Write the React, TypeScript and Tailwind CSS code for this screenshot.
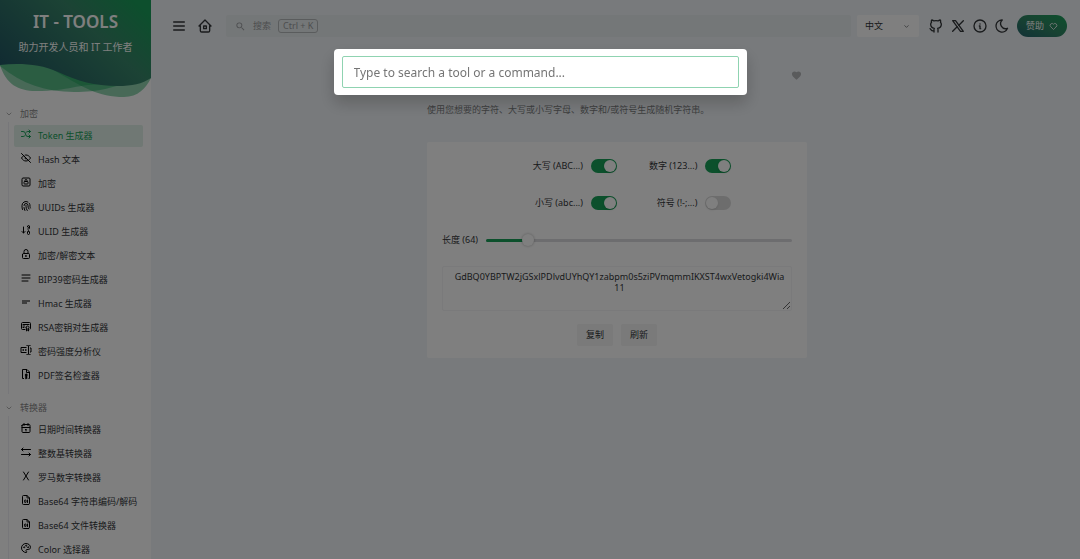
import React, { useState } from 'react';
import {
  TbAlignJustified, TbArrowsLeftRight, TbArrowsShuffle, TbBrandGithub, TbBrandX,
  TbCalendar, TbCertificate, TbEyeOff, TbFileDigit, TbFingerprint, TbHeart,
  TbHome2, TbInfoCircle, TbLetterX, TbLock, TbLockSquare, TbMenu2, TbMoon,
  TbPalette, TbSortDescendingNumbers,
} from 'react-icons/tb';
import { MdFavorite, MdSearch, MdShortText } from 'react-icons/md';
import { ChevronDown } from 'lucide-react';

interface Tool {
  name: string;
  icon: React.ElementType;
}

interface Category {
  name: string;
  tools: Tool[];
}

const PasswordIcon = (props: React.SVGProps<SVGSVGElement>) => (
  <svg viewBox="0 0 24 24" width="1em" height="1em" fill="none" stroke="currentColor" strokeWidth="2" {...props}>
    <path d="M13 7H2v10h11M20 8h2v8h-2M17 3v18M13 3c2 0 4 0 4 2c0-2 2-2 4-2M13 21c2 0 4 0 4-2c0 2 2 2 4 2" />
    <path d="M5 12h3M10 12h3" strokeWidth="3" />
  </svg>
);

const FileCertIcon = (props: React.SVGProps<SVGSVGElement>) => (
  <svg viewBox="0 0 24 24" width="1em" height="1em" fill="none" stroke="currentColor" strokeWidth="2" {...props}>
    <path d="M8 21H5V3h9l5 5v13h-2" />
    <path d="M13 3v6h6" />
    <circle cx="12.5" cy="14" r="2" fill="currentColor" />
    <path d="M11 16v6l1.500-1l1.500 1v-6" fill="currentColor" strokeWidth="1" />
  </svg>
);

const categories: Category[] = [
  {
    name: '加密',
    tools: [
      { name: 'Token 生成器', icon: TbArrowsShuffle },
      { name: 'Hash 文本', icon: TbEyeOff },
      { name: '加密', icon: TbLockSquare },
      { name: 'UUIDs 生成器', icon: TbFingerprint },
      { name: 'ULID 生成器', icon: TbSortDescendingNumbers },
      { name: '加密/解密文本', icon: TbLock },
      { name: 'BIP39密码生成器', icon: TbAlignJustified },
      { name: 'Hmac 生成器', icon: MdShortText },
      { name: 'RSA密钥对生成器', icon: TbCertificate },
      { name: '密码强度分析仪', icon: PasswordIcon },
      { name: 'PDF签名检查器', icon: FileCertIcon },
    ],
  },
  {
    name: '转换器',
    tools: [
      { name: '日期时间转换器', icon: TbCalendar },
      { name: '整数基转换器', icon: TbArrowsLeftRight },
      { name: '罗马数字转换器', icon: TbLetterX },
      { name: 'Base64 字符串编码/解码', icon: TbFileDigit },
      { name: 'Base64 文件转换器', icon: TbFileDigit },
      { name: 'Color 选择器', icon: TbPalette },
    ],
  },
];

const Hero = () => (
  <a href="#" className="relative block h-[98px] shrink-0 text-center text-white">
    <svg viewBox="0 0 151 98" preserveAspectRatio="none" className="absolute inset-0 h-full w-full">
      <defs>
        <linearGradient id="hero" x1="0" y1="0.8" x2="1" y2="0.2">
          <stop offset="0" stopColor="#215563" />
          <stop offset="0.65" stopColor="#38866a" />
          <stop offset="1" stopColor="#1a9e5a" />
        </linearGradient>
      </defs>
      <g fill="#18a058" fillOpacity="0.48">
        <path d="M0 65C6 84 18 91 36 91C70 91 76 84 108 84V60H0Z" />
        <path d="M0 66C22 84 46 92 74 92C100 92 112 88 140 78V60H0Z" />
        <path d="M50 68C84 88 98 97 124 97C138 97 146 88 151 78V60H50Z" />
      </g>
      <path d="M0 65C20 63 40 64 58 72C78 81 94 86 118 86C132 86 142 84 151 78V0H0Z" fill="url(#hero)" />
    </svg>
    <div className="relative pt-2">
      <div className="text-[17px] font-semibold leading-[28px]">IT - TOOLS</div>
      <div className="text-[10px] leading-[22px]">助力开发人员和 IT 工作者</div>
    </div>
  </a>
);

const ToolMenu = ({ category }: { category: Category }) => (
  <section className="mb-[6px]">
    <button className="flex h-[16px] w-full items-center gap-[7px] pl-[5px] text-[9px] text-[#888]">
      <ChevronDown size={8} strokeWidth={2} />
      {category.name}
    </button>
    <div className="flex">
      <div className="ml-[8px] w-px bg-[#efeff5]" />
      <ul className="min-w-0 flex-1 pb-[6px] pl-[5px] pr-2 pt-[2px]">
        {category.tools.map(({ name, icon: Icon }, i) => {
          const active = category.name === '加密' && i === 0;
          return (
            <li key={name} className="h-[24px] py-px">
              <a
                href="#"
                className={
                  active
                    ? 'flex h-[22px] items-center gap-[6px] rounded-xs bg-[#e0f1e8] pl-[6px] text-[9px] text-[#18a058]'
                    : 'flex h-[22px] items-center gap-[6px] rounded-xs pl-[6px] text-[9px] text-[#333639]'
                }
              >
                <Icon className={active ? 'mb-[5px] size-[12px] shrink-0' : 'mb-[5px] size-[12px] shrink-0 text-black'} />
                <span className="whitespace-nowrap">{name}</span>
              </a>
            </li>
          );
        })}
      </ul>
    </div>
  </section>
);

const Sidebar = () => (
  <aside className="h-screen w-[151px] shrink-0 overflow-hidden bg-white">
    <Hero />
    <nav className="pt-2">
      {categories.map((category) => (
        <ToolMenu key={category.name} category={category} />
      ))}
    </nav>
  </aside>
);

const TopBar = () => (
  <header className="flex h-[22px] items-center pl-[20px] pr-[13px] text-[#333639]">
    <button aria-label="Toggle menu" className="mr-[10px]"><TbMenu2 size={16} /></button>
    <a href="#" aria-label="Home" className="mr-[13px]"><TbHome2 size={16} /></a>
    <button className="flex h-[22px] flex-1 items-center rounded-xs bg-[#e9eef0] pl-[9px] text-[9px] text-[#9a9da0]">
      <MdSearch size={11} className="mr-[7px]" />
      搜索
      <span className="ml-[7px] flex h-[14px] items-center rounded-[3px] border border-[#b5b8ba] px-[4px]">Ctrl + K</span>
    </button>
    <div className="relative ml-[6px] h-[22px] w-[62px]">
      <select aria-label="Language" className="block h-full w-full appearance-none rounded-xs bg-white pl-[8px] text-[9px]">
        <option>中文</option>
      </select>
      <ChevronDown size={7} className="pointer-events-none absolute right-[9px] top-[8px]" />
    </div>
    <div className="ml-[9px] flex items-center gap-[6px]">
      <a href="#" aria-label="GitHub"><TbBrandGithub size={16} /></a>
      <a href="#" aria-label="X"><TbBrandX size={16} /></a>
      <a href="#" aria-label="About"><TbInfoCircle size={16} /></a>
      <button aria-label="Dark mode"><TbMoon size={16} /></button>
    </div>
    <a
      href="#"
      className="ml-[7px] flex h-[22px] w-[50px] items-center justify-center gap-[5px] rounded-full bg-linear-to-tr from-[#25636c] via-[#2f8564] to-[#14a058] text-[9px] text-white"
    >
      赞助 <TbHeart size={9} />
    </a>
  </header>
);

interface SwitchProps {
  label: string;
  checked: boolean;
  onChange: (value: boolean) => void;
}

const Switch = ({ label, checked, onChange }: SwitchProps) => (
  <label className="flex h-[22px] items-center justify-end gap-[8px]">
    {label}
    <input
      type="checkbox"
      role="switch"
      checked={checked}
      onChange={(e) => onChange(e.target.checked)}
      className="h-[14px] w-[26px] appearance-none rounded-full bg-[#dbdbdb] p-px before:block before:size-[12px] before:rounded-full before:bg-white before:shadow-sm checked:bg-[#18a058] checked:before:translate-x-[12px]"
    />
  </label>
);

const TokenGenerator = () => {
  const [upper, setUpper] = useState(true);
  const [lower, setLower] = useState(true);
  const [numbers, setNumbers] = useState(true);
  const [symbols, setSymbols] = useState(false);
  const [length, setLength] = useState(64);
  const [token, setToken] = useState('GdBQ0YBPTW2jGSxlPDlvdUYhQY1zabpm0s5ziPVmqmmIKXST4wxVetogki4Wia11');

  const refresh = () => {
    const chars =
      (upper ? 'ABCDEFGHIJKLMOPQRSTUVWXYZ' : '') +
      (lower ? 'abcdefghijklmopqrstuvwxyz' : '') +
      (numbers ? '0123456789' : '') +
      (symbols ? '.,;:!?/-"\'#{([-|@)]=}*+' : '');
    setToken(Array.from({ length }, () => chars.charAt(Math.floor(Math.random() * chars.length))).join(''));
  };

  return (
    <div className="rounded-xs bg-white px-[15px] pb-[12px] pt-[13px] text-[9px] text-[#333639]">
      <div className="flex justify-center gap-x-[32px] pl-[30px]">
        <div className="flex flex-col gap-y-[15px]">
          <Switch label="大写 (ABC...)" checked={upper} onChange={setUpper} />
          <Switch label="小写 (abc...)" checked={lower} onChange={setLower} />
        </div>
        <div className="flex flex-col gap-y-[15px]">
          <Switch label="数字 (123...)" checked={numbers} onChange={setNumbers} />
          <Switch label="符号 (!-;...)" checked={symbols} onChange={setSymbols} />
        </div>
      </div>
      <div className="mt-[15px] flex h-[22px] items-center gap-[8px]">
        <label htmlFor="length" className="whitespace-nowrap">长度 ({length})</label>
        <div className="relative flex h-[12px] min-w-0 flex-1 items-center">
          <div className="h-[3px] w-full overflow-hidden rounded-full bg-[#dbdbdf]">
            <div className="h-full bg-[#18a058]" style={{ width: `${(length / 512) * 100 + 1}%` }} />
          </div>
          <input
            id="length"
            type="range"
            min={1}
            max={512}
            value={length}
            onChange={(e) => setLength(Number(e.target.value))}
            className="absolute inset-0 w-full appearance-none bg-transparent [&::-webkit-slider-thumb]:size-[12px] [&::-webkit-slider-thumb]:appearance-none [&::-webkit-slider-thumb]:rounded-full [&::-webkit-slider-thumb]:bg-white [&::-webkit-slider-thumb]:shadow-[0_0_3px_rgba(0,0,0,0.3)]"
          />
        </div>
      </div>
      <textarea
        aria-label="Token"
        value={token}
        onChange={(e) => setToken(e.target.value)}
        className="mt-[15px] block h-[45px] w-full break-all rounded-xs border border-[#f4f4f6] py-[4px] pl-[11px] pr-[6px] text-center leading-[11px]"
      />
      <div className="mt-[13px] flex justify-center gap-[8px]">
        <button className="h-[22px] w-[36px] rounded-xs bg-[#f4f4f4]" onClick={() => navigator.clipboard.writeText(token)}>复制</button>
        <button className="h-[22px] w-[36px] rounded-xs bg-[#f4f4f4]" onClick={refresh}>刷新</button>
      </div>
    </div>
  );
};

const CommandPalette = () => (
  <div className="fixed inset-0 flex items-start justify-center bg-black/50 pt-[49px]">
    <div role="dialog" aria-label="Search" className="w-[413px] rounded-[4px] bg-white px-[8px] py-[7px] shadow-[0_8px_16px_rgba(0,0,0,0.2)]">
      <input
        type="text"
        aria-label="Search tools"
        placeholder="Type to search a tool or a command..."
        className="block h-[32px] w-full rounded-[2px] border border-[#8fd3b1] px-[11px] text-[12px] outline-none placeholder:text-[#757575]"
      />
    </div>
  </div>
);

const App: React.FC = () => {
  return (
    <div className="flex h-screen overflow-hidden bg-[#f1f5f9] font-['Noto_Sans','Noto_Sans_CJK_SC',sans-serif]">
      <Sidebar />
      <div className="min-w-0 flex-1 pt-[15px]">
        <TopBar />
        <div className="flex justify-center pl-[3px] pt-[27px]">
          <main className="w-[380px]">
            <div className="flex h-[22px] items-center justify-between">
              <h1 className="text-[22px] font-light text-[#333639]">Token 生成器</h1>
              <button aria-label="Favorite" className="mr-[5px] text-[#b4b6b8]"><MdFavorite size={11} /></button>
            </div>
            <div className="mt-[8px] h-px w-[130px] bg-[#c4c6c8]" />
            <p className="mb-[24px] mt-[7px] text-[9px] leading-[16px] text-[#7b7d80]">
              使用您想要的字符、大写或小写字母、数字和/或符号生成随机字符串。
            </p>
            <TokenGenerator />
          </main>
        </div>
      </div>
      <CommandPalette />
    </div>
  );
};

export default App;
